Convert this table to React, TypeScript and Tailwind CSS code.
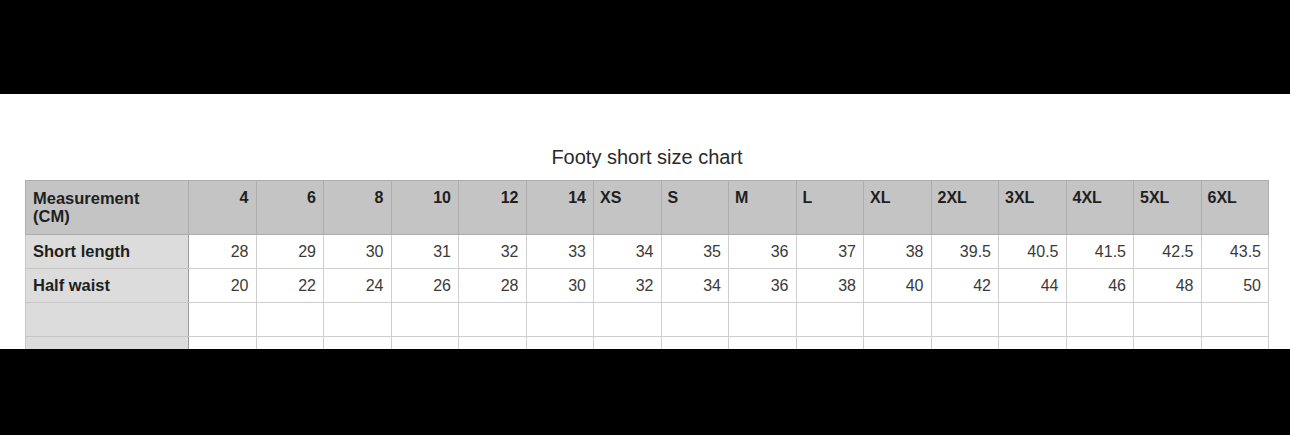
import React from 'react';

const sizes = ['4', '6', '8', '10', '12', '14', 'XS', 'S', 'M', 'L', 'XL', '2XL', '3XL', '4XL', '5XL', '6XL'];
const numeric = (s: string) => /^\d+$/.test(s);

const rows = [
  { label: 'Short length', values: ['28', '29', '30', '31', '32', '33', '34', '35', '36', '37', '38', '39.5', '40.5', '41.5', '42.5', '43.5'] },
  { label: 'Half waist', values: ['20', '22', '24', '26', '28', '30', '32', '34', '36', '38', '40', '42', '44', '46', '48', '50'] },
  { label: '', values: Array(16).fill('') },
  { label: '', values: Array(16).fill('') },
];

export default function App() {
  return (
    <div className="h-[435px] w-[1290px] bg-black flex flex-col" style={{ fontFamily: '"Liberation Sans", Arial, sans-serif' }}>
      <div className="h-[94px] shrink-0" />
      <div className="h-[255px] shrink-0 bg-white overflow-hidden pt-[52px]">
        <h1 className="text-center text-[20px] leading-[22px] text-[#2a2a2a] ml-[4px]">Footy short size chart</h1>
        <div className="pl-[25px] pt-[12px]">
          <table className="table-fixed border-collapse w-[1244px]">
            <colgroup>
              <col className="w-[163px]" />
              {sizes.map(s => <col key={s} />)}
            </colgroup>
            <thead>
              <tr className="h-[54px] bg-[#c4c4c4]">
                <th className="border border-[#adadad] align-top text-left px-[7px] pt-[8px] text-[16.5px] leading-[18px] font-bold text-[#1f1f1f]">
                  Measurement<br />(CM)
                </th>
                {sizes.map(s => (
                  <th
                    key={s}
                    className={`border border-[#adadad] align-top pt-[8px] text-[16px] leading-[18px] font-bold text-[#1f1f1f] ${numeric(s) ? 'text-right pr-[7px]' : 'text-left pl-[6px]'}`}
                  >
                    {s}
                  </th>
                ))}
              </tr>
            </thead>
            <tbody>
              {rows.map((r, i) => (
                <tr key={i} className="h-[34px]">
                  <td className="bg-[#dcdcdc] border border-[#c6c6c6] border-r-[#9c9c9c] px-[7px] text-[16.5px] font-bold text-[#1f1f1f]">
                    {r.label}
                  </td>
                  {r.values.map((v, j) => (
                    <td key={j} className="border border-[#cfcfcf] text-right pr-[7px] text-[16px] text-[#3a3a3a]">
                      {v}
                    </td>
                  ))}
                </tr>
              ))}
            </tbody>
          </table>
        </div>
      </div>
      <div className="flex-1" />
    </div>
  );
}
